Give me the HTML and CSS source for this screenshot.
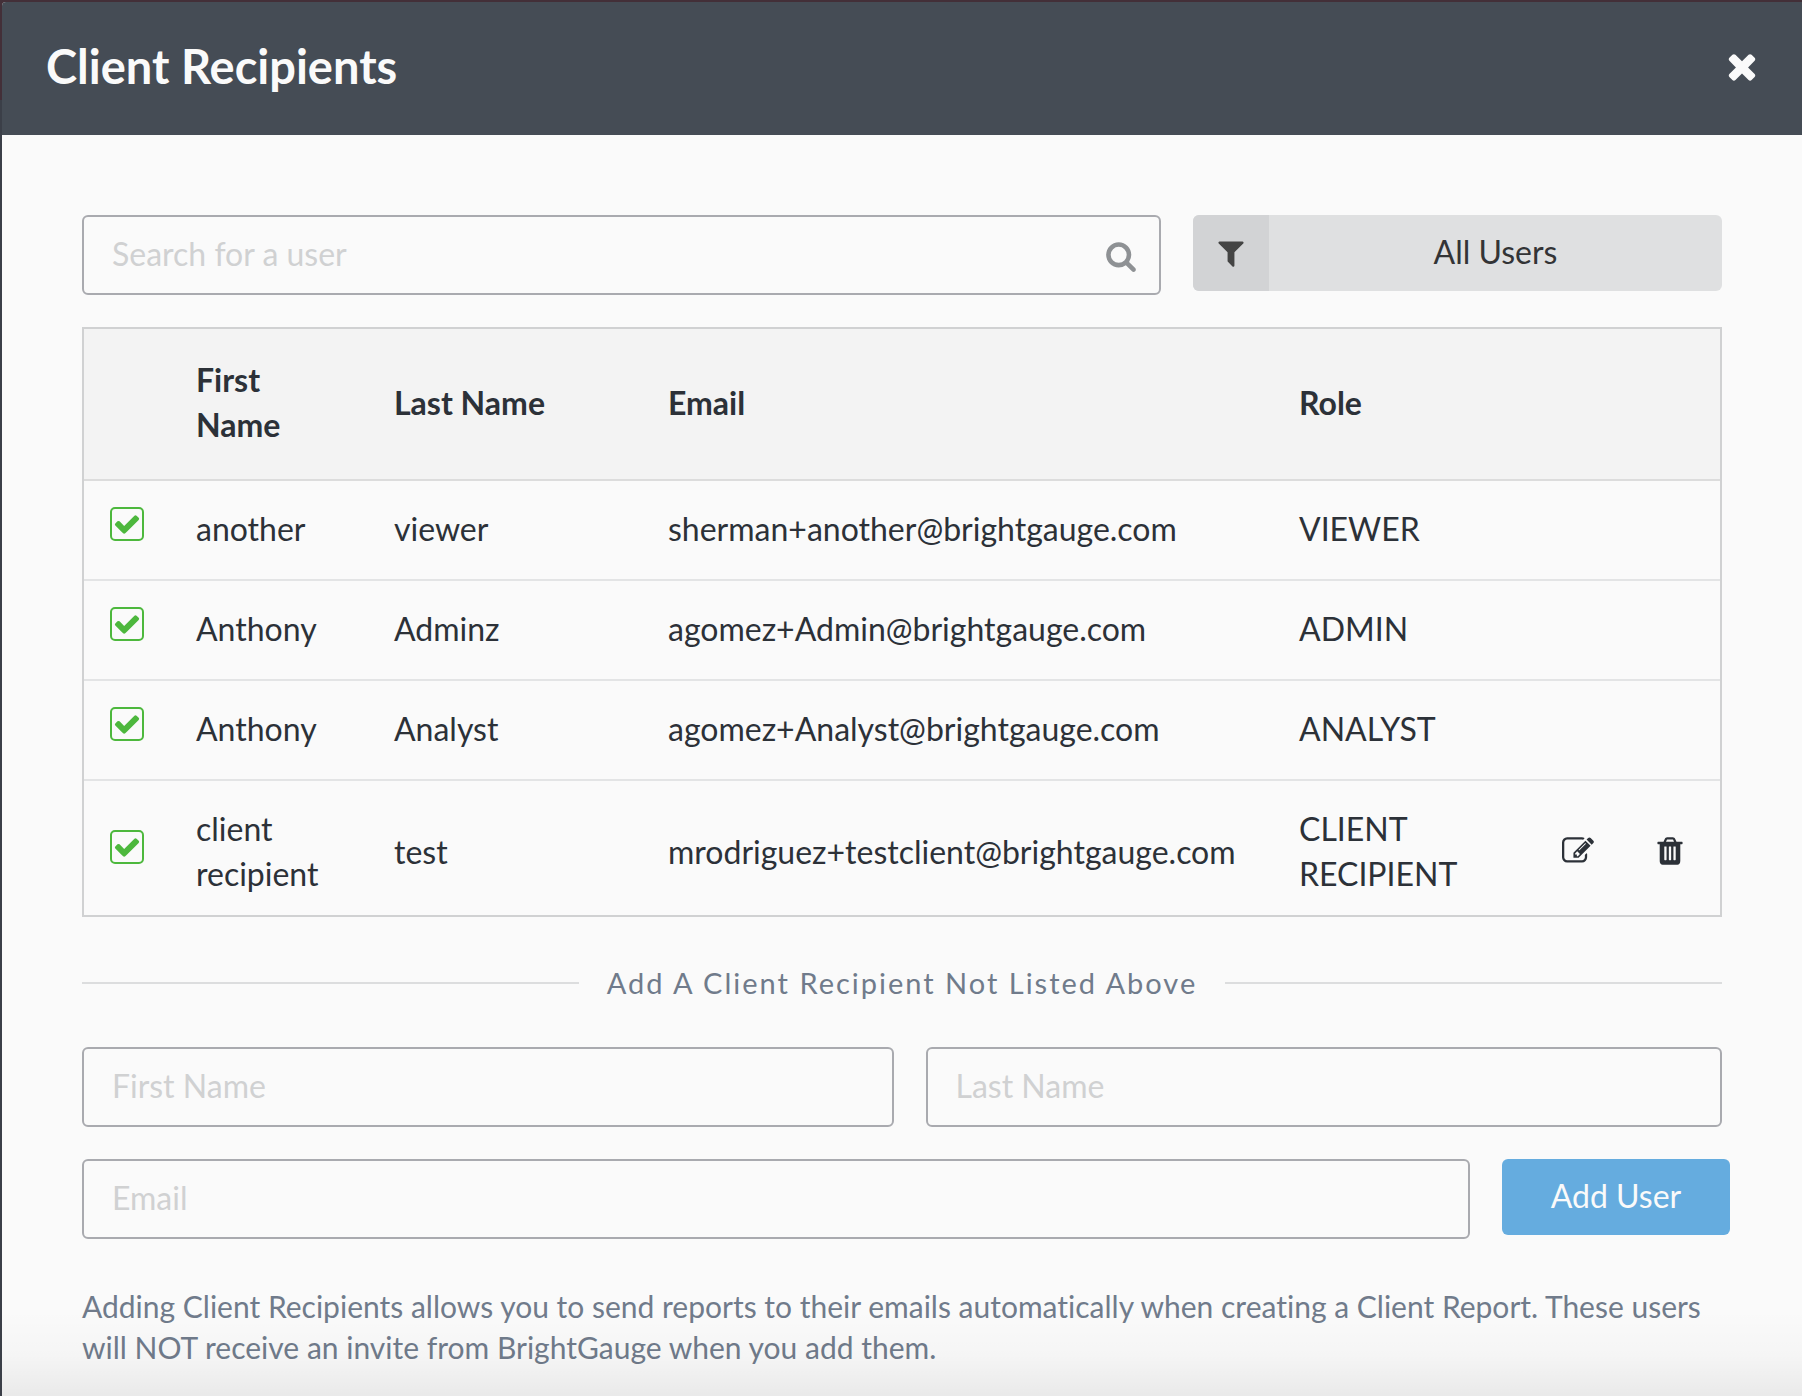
FILE: index.html
```html
<!DOCTYPE html>
<html lang="en">
<head>
	<meta charset="utf-8">
	<meta name="viewport" content="width=device-width, initial-scale=1">
	<title>Client Recipients</title>
	<link rel="stylesheet" href="styles.css">
</head>
<body>

<!-- icon sprites -->
<svg class="sprites" aria-hidden="true">
	<symbol id="icon-close" viewBox="0 0 1792 1792"><path d="M1490 1322q0 40-28 68l-136 136q-28 28-68 28t-68-28l-294-294-294 294q-28 28-68 28t-68-28l-136-136q-28-28-28-68t28-68l294-294-294-294q-28-28-28-68t28-68l136-136q28-28 68-28t68 28l294 294 294-294q28-28 68-28t68 28l136 136q28 28 28 68t-28 68l-294 294 294 294q28 28 28 68z"/></symbol>
	<symbol id="icon-search" viewBox="0 0 1792 1792"><path d="M1216 832q0-185-131.500-316.500t-316.500-131.500-316.500 131.500-131.500 316.500 131.500 316.500 316.500 131.500 316.500-131.500 131.500-316.500zm512 832q0 52-38 90t-90 38q-54 0-90-38l-343-342q-179 124-399 124-143 0-273.500-55.500t-225-150-150-225-55.500-273.500 55.500-273.500 150-225 225-150 273.500-55.500 273.500 55.500 225 150 150 225 55.500 273.500q0 220-124 399l343 343q37 37 37 90z"/></symbol>
	<symbol id="icon-filter" viewBox="0 0 1792 1792"><path d="M1595 295q17 41-14 70l-493 493v742q0 42-39 59-13 5-25 5-27 0-45-19l-256-256q-19-19-19-45v-486l-493-493q-31-29-14-70 17-39 59-39h1280q42 0 59 39z"/></symbol>
	<symbol id="icon-check" viewBox="0 0 1792 1792"><path d="M1671 566q0 40-28 68l-724 724-136 136q-28 28-68 28t-68-28l-136-136-362-362q-28-28-28-68t28-68l136-136q28-28 68-28t68 28l294 295 656-657q28-28 68-28t68 28l136 136q28 28 28 68z"/></symbol>
	<symbol id="icon-trash" viewBox="0 0 1792 1792"><path d="M704 1376v-704q0-14-9-23t-23-9h-64q-14 0-23 9t-9 23v704q0 14 9 23t23 9h64q14 0 23-9t9-23zm256 0v-704q0-14-9-23t-23-9h-64q-14 0-23 9t-9 23v704q0 14 9 23t23 9h64q14 0 23-9t9-23zm256 0v-704q0-14-9-23t-23-9h-64q-14 0-23 9t-9 23v704q0 14 9 23t23 9h64q14 0 23-9t9-23zm-544-992h448l-48-117q-7-9-17-11h-317q-10 2-17 11zm928 32v64q0 14-9 23t-23 9h-96v948q0 83-47 143.500t-113 60.500h-832q-66 0-113-58.500t-47-141.500v-952h-96q-14 0-23-9t-9-23v-64q0-14 9-23t23-9h309l70-167q15-37 54-63t79-26h320q40 0 79 26t54 63l70 167h309q14 0 23 9t9 23z"/></symbol>
	<symbol id="icon-edit" viewBox="0 0 1792 1792"><path d="M888 1184l116-116-152-152-116 116v56h96v96h56zm440-720q-16-16-33 1l-350 350q-17 17-1 33t33-1l350-350q17-17 1-33zm80 594v190q0 119-84.500 203.500t-203.500 84.500h-832q-119 0-203.500-84.500t-84.500-203.500v-832q0-119 84.500-203.500t203.500-84.500h832q63 0 117 25 15 7 18 23 3 17-9 29l-49 49q-14 14-32 8-23-6-45-6h-832q-66 0-113 47t-47 113v832q0 66 47 113t113 47h832q66 0 113-47t47-113v-126q0-13 9-22l64-64q15-15 35-7t20 29zm-96-738l288 288-672 672h-288v-288zm444 132l-92 92-288-288 92-92q28-28 68-28t68 28l152 152q28 28 28 68t-28 68z"/></symbol>
</svg>

<div class="modal">
	<header class="modal-header">
		<h1>Client Recipients</h1>
		<button type="button" class="icon-btn close" aria-label="Close"><svg><use href="#icon-close"/></svg></button>
	</header>

	<div class="modal-body">
		<div class="toolbar">
			<div class="search">
				<input type="text" class="field" placeholder="Search for a user" aria-label="Search for a user">
				<svg class="icon"><use href="#icon-search"/></svg>
			</div>
			<label class="filter">
				<span class="filter-icon"><svg class="icon"><use href="#icon-filter"/></svg></span>
				<select aria-label="Filter users">
					<option>All Users</option>
				</select>
			</label>
		</div>

		<table class="users">
			<colgroup>
				<col class="col-check">
				<col class="col-first">
				<col class="col-last">
				<col class="col-email">
				<col class="col-role">
				<col class="col-edit">
				<col class="col-delete">
			</colgroup>
			<thead>
				<tr>
					<th></th>
					<th>First Name</th>
					<th>Last Name</th>
					<th>Email</th>
					<th>Role</th>
					<th></th>
					<th></th>
				</tr>
			</thead>
			<tbody>
				<tr>
					<td class="cell-check"><label class="check"><input type="checkbox" aria-label="another viewer" checked><svg><use href="#icon-check"/></svg></label></td>
					<td>another</td>
					<td>viewer</td>
					<td>sherman+another@brightgauge.com</td>
					<td>VIEWER</td>
					<td></td>
					<td></td>
				</tr>
				<tr>
					<td class="cell-check"><label class="check"><input type="checkbox" aria-label="Anthony Adminz" checked><svg><use href="#icon-check"/></svg></label></td>
					<td>Anthony</td>
					<td>Adminz</td>
					<td>agomez+Admin@brightgauge.com</td>
					<td>ADMIN</td>
					<td></td>
					<td></td>
				</tr>
				<tr>
					<td class="cell-check"><label class="check"><input type="checkbox" aria-label="Anthony Analyst" checked><svg><use href="#icon-check"/></svg></label></td>
					<td>Anthony</td>
					<td>Analyst</td>
					<td>agomez+Analyst@brightgauge.com</td>
					<td>ANALYST</td>
					<td></td>
					<td></td>
				</tr>
				<tr>
					<td class="cell-check"><label class="check"><input type="checkbox" aria-label="client recipient test" checked><svg><use href="#icon-check"/></svg></label></td>
					<td>client recipient</td>
					<td>test</td>
					<td>mrodriguez+testclient@brightgauge.com</td>
					<td>CLIENT RECIPIENT</td>
					<td><button type="button" class="icon-btn" aria-label="Edit"><svg class="icon"><use href="#icon-edit"/></svg></button></td>
					<td><button type="button" class="icon-btn" aria-label="Delete"><svg class="icon"><use href="#icon-trash"/></svg></button></td>
				</tr>
			</tbody>
		</table>

		<h2 class="divider">Add A Client Recipient Not Listed Above</h2>

		<form class="add-user">
			<div class="names">
				<input type="text" class="field" placeholder="First Name" aria-label="First Name">
				<input type="text" class="field" placeholder="Last Name" aria-label="Last Name">
			</div>
			<div class="email">
				<input type="email" class="field" placeholder="Email" aria-label="Email">
				<button type="submit" class="btn">Add User</button>
			</div>
		</form>

		<p class="note">Adding Client Recipients allows you to send reports to their emails automatically when creating a Client Report. These users will NOT receive an invite from BrightGauge when you add them.</p>
	</div>
</div>

</body>
</html>
```
FILE: styles.css
```css
* { box-sizing: border-box; }

body {
	margin: 0;
	background: linear-gradient(#432f38 100px, #3b3f48 100px);
	color: #2c3138;
	font: 32px/45px Lato, "Open Sans", sans-serif;
	font-variant-ligatures: none;
}

input, select, button { font: inherit; color: inherit; }
svg { display: block; fill: currentColor; }

.sprites { position: absolute; width: 0; height: 0; }
.icon { width: 32px; height: 32px; }
.icon-btn { display: block; padding: 0; border: 0; background: none; cursor: pointer; }

/* modal */
.modal {
	position: relative;
	min-height: calc(100vh - 2px);
	margin: 2px 0 0 2px;
	border-top-left-radius: 4px;
	background: #fafafa;
	overflow: hidden;
}
.modal::after {
	content: "";
	position: absolute;
	left: 0;
	right: 0;
	bottom: 0;
	height: 90px;
	background: linear-gradient(rgba(0, 0, 0, 0), rgba(0, 0, 0, 0.02) 50%, rgba(0, 0, 0, 0.07));
	pointer-events: none;
}
.modal-header {
	display: flex;
	align-items: center;
	justify-content: space-between;
	height: 133px;
	padding: 0 40px 6px 44px;
	background: #454c55;
	color: #fafafa;
}
.modal-header h1 { margin: 0; font-size: 47px; font-weight: bold; line-height: 56px; }
.close svg { width: 40px; height: 40px; }
.modal-body { padding: 80px 80px 32px; }

/* fields */
.field {
	display: block;
	width: 100%;
	height: 80px;
	padding: 0 28px 4px;
	border: 2px solid #a9aaaf;
	border-radius: 6px;
	background: #fafafa;
}
.field::placeholder { color: #d0d1d2; opacity: 1; }

/* search and filter */
.toolbar { display: flex; align-items: flex-start; gap: 32px; margin-bottom: 32px; }
.search { position: relative; flex: 1; }
.search .icon { position: absolute; top: 25px; right: 24px; color: #8e9194; }
.filter {
	display: flex;
	width: 529px;
	height: 76px;
	border-radius: 6px;
	background: #dfe0e1;
	color: #333436;
	overflow: hidden;
}
.filter-icon { display: flex; align-items: center; justify-content: center; width: 76px; background: #d2d3d5; color: #444; }
.filter select {
	flex: 1;
	padding: 0 0 4px;
	border: 0;
	background: none;
	appearance: none;
	text-align: center;
	text-align-last: center;
}

/* users table */
.users {
	width: 100%;
	table-layout: fixed;
	border: 2px solid #d0d1d2;
	border-spacing: 0;
}
.col-check { width: 88px; }
.col-first { width: 198px; }
.col-last { width: 274px; }
.col-role { width: 263px; }
.col-edit { width: 92px; }
.col-delete { width: 90px; }
.users th { padding: 28px 24px 32px; border-bottom: 2px solid #dcdcdc; background: #f3f3f3; font-weight: bold; text-align: left; }
.users td { padding: 25px 24px 28px; border-bottom: 2px solid #e3e4e5; }
.users tr:last-child td { padding: 25px 24px 19px; border-bottom: 0; }
.users .cell-check { padding: 16px 26px 28px; }
.users tr:last-child .cell-check { padding: 24px 26px 26px; }

.check { display: block; position: relative; width: 34px; height: 34px; color: #4db83d; }
.check input {
	display: block;
	width: 34px;
	height: 34px;
	margin: 0;
	border: 2px solid #4db83d;
	border-radius: 5px;
	appearance: none;
}
.check svg { position: absolute; top: 3px; left: 3px; width: 28px; height: 28px; visibility: hidden; pointer-events: none; }
.check input:checked + svg { visibility: visible; }

/* add user */
.divider {
	display: flex;
	align-items: center;
	gap: 28px;
	margin: 45px 0 44px;
	color: #707b8b;
	font-size: 29px;
	font-weight: normal;
	line-height: 41px;
	letter-spacing: 2px;
}
.divider::before, .divider::after { content: ""; flex: 1; height: 2px; background: #dcddde; }
.names { display: grid; grid-template-columns: 811fr 796fr; gap: 32px; margin-bottom: 32px; }
.email { display: flex; gap: 32px; margin-right: -8px; }
.btn {
	flex: none;
	width: 228px;
	height: 76px;
	padding: 0 0 4px;
	border: 0;
	border-radius: 6px;
	background: #65acdf;
	color: #fafafa;
	cursor: pointer;
}
.note { margin: 47px 0 0; color: #707b8b; font-size: 30px; line-height: 41px; }
```
